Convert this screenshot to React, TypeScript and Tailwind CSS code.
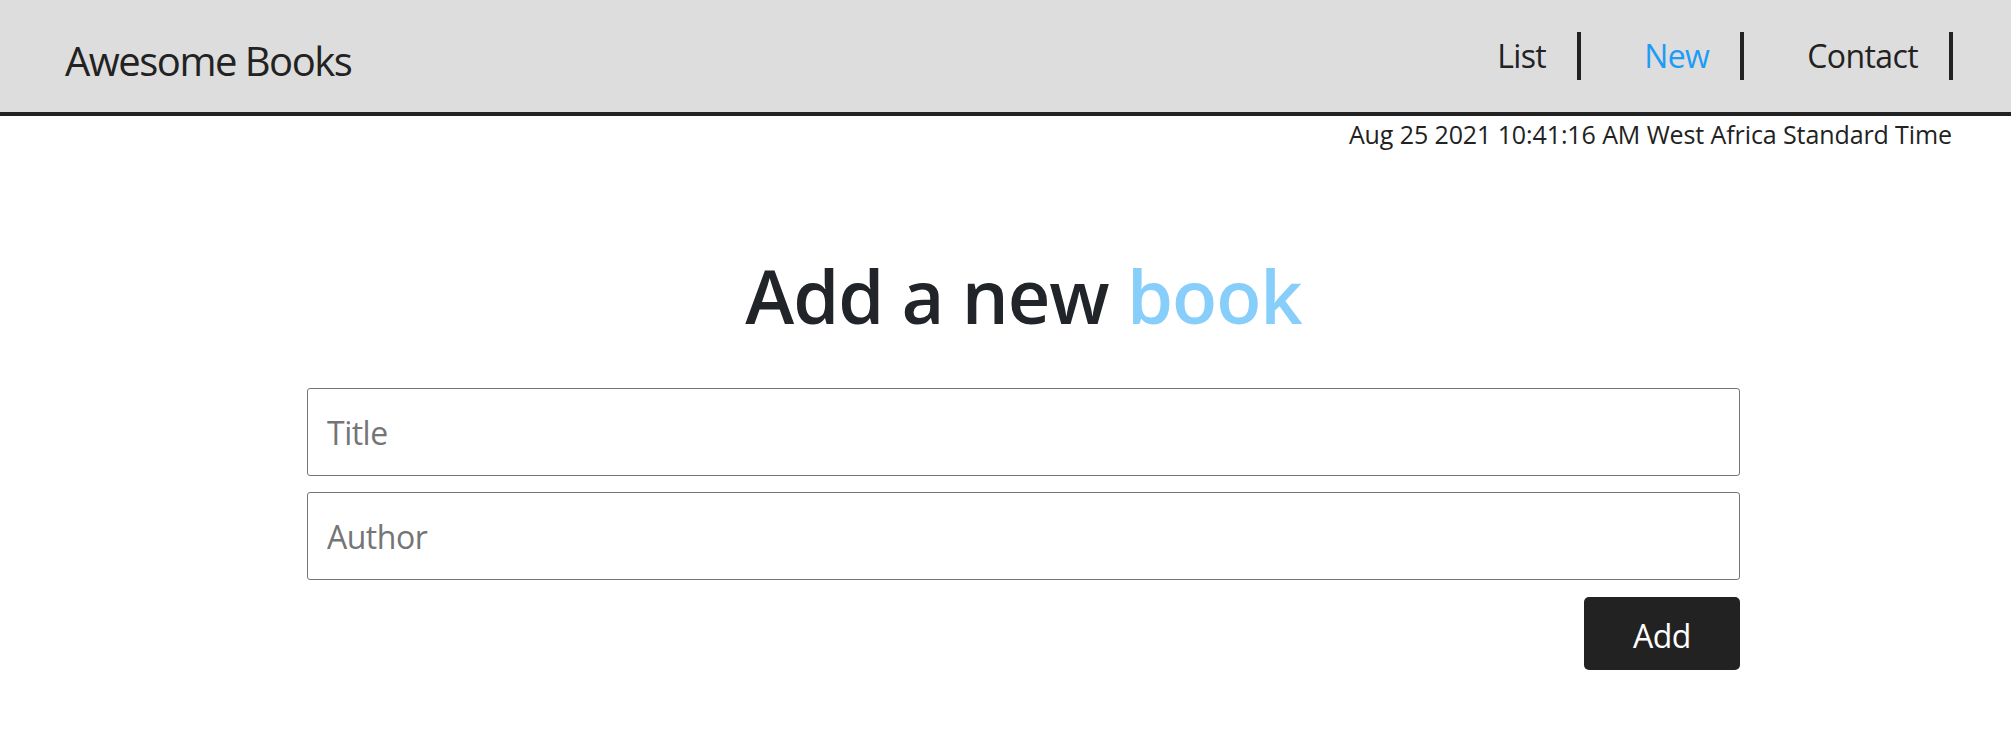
import React from "react";

const font = { fontFamily: '"Open Sans", "Noto Sans", sans-serif' };

export default function App() {
  return (
    <div className="min-h-[746px] bg-white text-[#222]" style={font}>
      <header className="h-[116px] bg-[#dddddd] border-b-4 border-[#222] flex items-center justify-between pl-[65px] pr-[58px]">
        <h1 className="mt-[10px] text-[40px] leading-none font-normal tracking-[-1.5px] text-[#222]">
          Awesome Books
        </h1>
        <nav>
          <ul className="flex items-center">
            <li className="flex items-center">
              <a className="text-[32px] leading-none tracking-[-0.6px] text-[#222]">List</a>
              <span className="ml-[31px] w-[4px] h-[48px] bg-[#222]" />
            </li>
            <li className="flex items-center ml-[63px]">
              <a className="text-[32px] leading-none tracking-[-0.6px] text-[#1c9cf6]">New</a>
              <span className="ml-[31px] w-[4px] h-[48px] bg-[#222]" />
            </li>
            <li className="flex items-center ml-[63px]">
              <a className="text-[32px] leading-none tracking-[-0.6px] text-[#222]">Contact</a>
              <span className="ml-[31px] w-[4px] h-[48px] bg-[#222]" />
            </li>
          </ul>
        </nav>
      </header>
      <p className="mt-[6px] pr-[59px] text-right text-[25px] leading-none tracking-[-0.1px] text-[#222]">
        Aug 25 2021 10:41:16 AM West Africa Standard Time
      </p>
      <main className="ml-[307px] w-[1433px]">
        <h2 className="mt-[112px] text-center text-[74px] leading-none font-semibold tracking-[-1px] text-[#212529]">
          Add a new <span className="text-[#87cefa]">book</span>
        </h2>
        <form className="mt-[55px] flex flex-col" onSubmit={(e) => e.preventDefault()}>
          <input
            type="text"
            placeholder="Title"
            className="h-[88px] w-full border border-[#767676] rounded-[3px] pl-[19px] text-[32px] tracking-[-0.5px] placeholder:text-[#757575] outline-none"
            style={font}
          />
          <input
            type="text"
            placeholder="Author"
            className="mt-[16px] h-[88px] w-full border border-[#767676] rounded-[3px] pl-[19px] text-[32px] tracking-[-0.5px] placeholder:text-[#757575] outline-none"
            style={font}
          />
          <div className="flex justify-end mt-[17px]">
            <button
              type="submit"
              className="w-[156px] h-[73px] pt-[5px] bg-[#222] text-white rounded-[5px] text-[32px] leading-none tracking-[-0.5px]"
              style={font}
            >
              Add
            </button>
          </div>
        </form>
      </main>
    </div>
  );
}
